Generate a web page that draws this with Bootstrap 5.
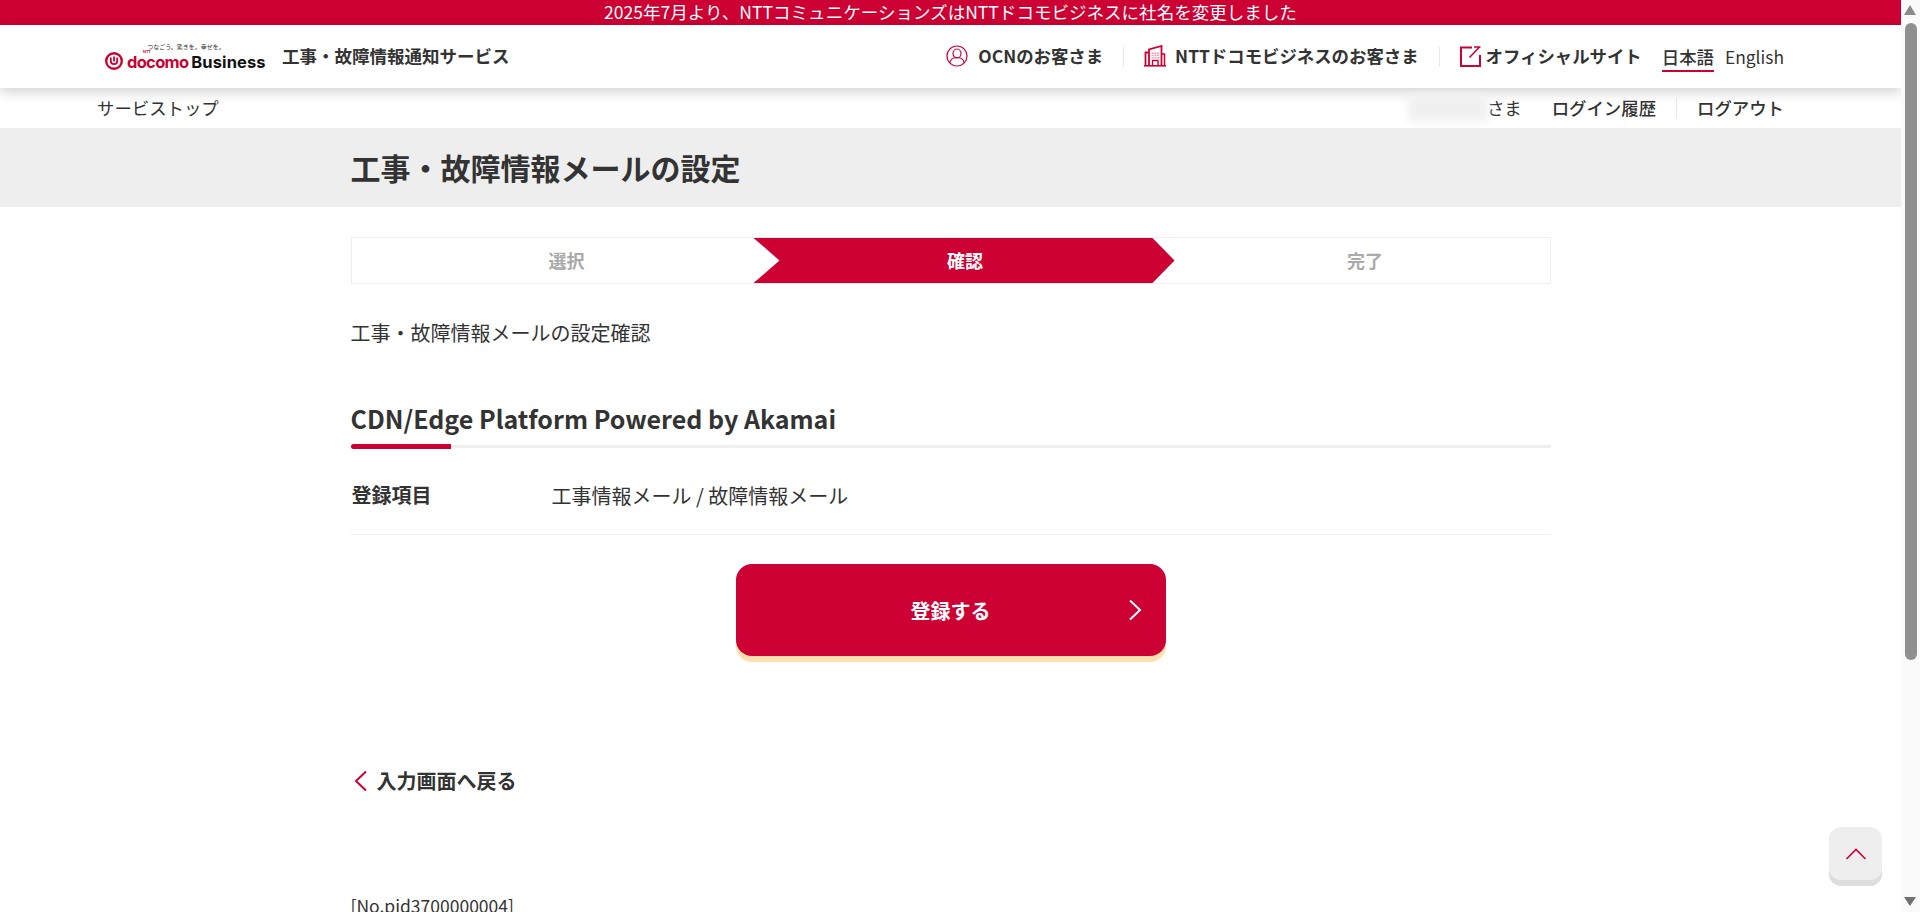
<!DOCTYPE html>
<html lang="ja">
<head>
    <meta charset="UTF-8">
    <meta name="viewport" content="width=device-width, initial-scale=1.0">
    <title>工事・故障情報メールの設定</title>
    <link href="https://cdn.jsdelivr.net/npm/bootstrap@5.3.0/dist/css/bootstrap.min.css" rel="stylesheet">
    <style>
        body { font-family: "Noto Sans CJK JP", "Noto Sans", sans-serif; color: #333; background: #fff; font-size: 18px; padding-right: 19px; padding-bottom: 40px; }
        a { color: inherit; text-decoration: none; }

        .fake-scroll { position: fixed; top: 0; right: 0; bottom: 0; width: 19px; background: #fafafa; z-index: 20; }
        .scroll-up, .scroll-down { position: absolute; left: 3px; width: 0; height: 0; border-left: 6.500px solid transparent; border-right: 6.500px solid transparent; }
        .scroll-up { top: 5px; border-bottom: 10px solid #8a8a8a; }
        .scroll-down { bottom: 6px; border-top: 9px solid #6f6f6f; }
        .scroll-thumb { position: absolute; left: 4px; top: 23px; width: 12px; height: 637px; background: #8f8f8f; border-radius: 6px; }

        .notice-bar { background: #c03; color: #fff; height: 25px; line-height: 24px; font-size: 17.550px; text-align: center; }
        .top-head { height: 63px; background: #fff; box-shadow: 0 4px 12px rgba(0,0,0,.18); padding: 0 117px 0 105px; position: relative; }
        .logo-wrap { width: 158px; line-height: 1; position: relative; padding-top: 8px; }
        .logo-tag { position: absolute; top: 0; left: 42px; width: 78px; font-size: 6px; color: #333; text-align: center; white-space: nowrap; }
        .logo-ntt { position: absolute; top: 6px; left: 38px; font-family: "Liberation Sans", sans-serif; font-size: 4px; line-height: 4px; font-weight: 700; color: #c03; }
        .logo-main { height: 18px; white-space: nowrap; }
        .logo-docomo { font-family: "Inter", sans-serif; font-weight: 700; font-size: 16.500px; line-height: 12px; color: #c03; letter-spacing: -.7px; margin-left: 4px; padding-top: 2px; }
        .logo-biz { font-family: "Inter", sans-serif; font-weight: 700; font-size: 16.500px; line-height: 12px; color: #111; margin-left: 3px; letter-spacing: .1px; padding-top: 2px; }
        .svc-name { font-size: 17.500px; font-weight: 700; margin-left: 19px; }
        .head-link { font-size: 17.400px; font-weight: 700; white-space: nowrap; }
        .head-sep { width: 1px; height: 20px; background: #e8e8e8; margin: 0 20px; }
        .lang-on { border-bottom: 2px solid #c03; line-height: 27px; padding-top: 1px; font-weight: 500; }
        .lang-off { font-weight: 400; margin-left: 11px; line-height: 27px; padding-top: 1px; padding-bottom: 2px; }

        .sub-nav { height: 40px; padding: 0 117px 0 97px; font-size: 17.400px; }
        .blur-name { width: 80px; height: 26px; background: #f0f0f0; filter: blur(4px); margin-right: -1px; }
        .sub-link { font-weight: 500; }
        .sub-sep { width: 1px; height: 20px; background: #e8e8e8; margin: 0 20px; }

        .title-band { background: #eee; height: 79px; }
        .page-wrap { width: 1200px; margin: 0 auto; }
        .page-title { font-size: 30px; font-weight: 700; margin: 0; line-height: 79px; }

        .step-bar { height: 47px; border: 1px solid #eee; margin-top: 30px; font-size: 18px; font-weight: 700; color: #aaa; }
        .step-item { width: 402px; padding-left: 28px; }
        .step-now { width: 421px; margin-right: -22px; background: #c03; color: #fff; clip-path: polygon(0 0, 399px 0, 100% 50%, 399px 100%, 0 100%, 26px 50%); padding-left: 2px; }
        .step-last { flex: 1; padding-left: 28px; }

        .intro-text { font-size: 20px; margin: 34px 0 0; line-height: 30px; }
        .sect-title { font-size: 25px; font-weight: 700; margin: 50px 0 0; line-height: 40px; }
        .sect-line { height: 3px; background: #eee; margin-top: 7px; position: relative; }
        .sect-line::before { content: ""; display: block; width: 100px; height: 5px; background: #c03; border-radius: 3px 0 0 3px; position: absolute; top: -1px; left: 0; }
        .info-row { padding: 31px 0 21px; border-bottom: 1px solid #eee; }
        .info-label { width: 201px; padding-left: 1px; font-size: 20px; font-weight: 700; line-height: 32px; }
        .info-value { font-size: 20px; line-height: 34px; }
        .submit-btn { display: flex; width: 430px; height: 92px; margin: 29px auto 0; background: #c03; color: #fff; border: 0; border-radius: 16px; box-shadow: 0 6px 0 #ffdfae; font-size: 20px; font-weight: 700; position: relative; padding-bottom: 5px; }
        .submit-btn:hover { background: #c03; color: #fff; }
        .btn-arrow { position: absolute; right: 24px; top: 35px; }
        .back-link { font-size: 20px; font-weight: 700; margin-top: 110px; padding-left: 2px; }
        .back-link svg { margin-right: 10px; }
        .page-no { font-size: 17.500px; margin-top: 97px; line-height: 26px; }
        .to-top { position: fixed; left: 1829px; top: 827px; width: 53px; height: 53px; background: #eee; border-radius: 12px; box-shadow: 0 6px 0 #ddd; }
    </style>
</head>
<body>
    <div class="notice-bar">2025年7月より、NTTコミュニケーションズはNTTドコモビジネスに社名を変更しました</div>

    <header class="top-head d-flex align-items-center justify-content-between">
        <div class="d-flex align-items-center">
            <a href="#" class="logo-wrap d-block">
                <div class="logo-tag">つなごう。驚きを。幸せを。</div>
                <span class="logo-ntt">NTT</span>
                <div class="logo-main d-flex align-items-center">
                    <svg width="18" height="18" viewBox="0 0 18 18" fill="none" stroke="#c03" class="flex-shrink-0">
                        <ellipse cx="9" cy="9" rx="7.800" ry="7.800" stroke-width="2.400"/>
                        <path d="M5.800 5.500v3.500a3.200 3.200 0 0 0 6.400 0V5.500" stroke-width="1.800"/>
                        <path d="M9 4.500v5" stroke-width="1.800"/>
                    </svg>
                    <span class="logo-docomo">docomo</span><span class="logo-biz">Business</span>
                </div>
            </a>
            <a href="#" class="svc-name">工事・故障情報通知サービス</a>
        </div>
        <nav class="d-flex align-items-center">
            <a href="#" class="head-link d-flex align-items-center" style="gap:10px">
                <svg width="22" height="22" viewBox="0 0 22 22" fill="none" stroke="#c03" stroke-width="1.200">
                    <circle cx="11" cy="11" r="10"/>
                    <ellipse cx="11" cy="8.500" rx="4" ry="4.500"/>
                    <path d="M3.800 18c.5-3.500 3-5.500 7.200-5.500s6.700 2 7.200 5.500"/>
                </svg>
                OCNのお客さま
            </a>
            <span class="head-sep"></span>
            <a href="#" class="head-link d-flex align-items-center" style="gap:9px">
                <svg width="22" height="22" viewBox="0 0 22 22" fill="none" stroke="#c03">
                    <path d="M1.500 20.500V7.500h3" stroke-width="1.800"/>
                    <path d="M5 20.500V4.500L17.500 1v19.500" stroke-width="1.800"/>
                    <path d="M17.500 9h3v11.500" stroke-width="1.500"/>
                    <path d="M0 20.800h22" stroke-width="1.600"/>
                    <path d="M7.500 7.500h7.500v6H7.500z" fill="#f0a0b8" stroke="none"/>
                    <path d="M10 7.500v6M12.500 7.500v6M7.500 9.500h7.500M7.500 11.500h7.500" stroke="#fff" stroke-width=".8"/>
                    <path d="M8.500 20.500v-5h5.500v5" stroke-width="1.400"/>
                </svg>
                NTTドコモビジネスのお客さま
            </a>
            <span class="head-sep"></span>
            <a href="#" class="head-link d-flex align-items-center" style="gap:5px">
                <svg width="21" height="21" viewBox="0 0 21 21" fill="none" stroke="#c03" stroke-width="2">
                    <path d="M12 1.500H1v18.500h19V9"/>
                    <path d="M9.500 11.500 19.500 1M14 1h6.500" stroke-width="1.600"/>
                </svg>
                オフィシャルサイト
            </a>
            <a href="#" class="head-link lang-on" style="margin-left:20px">日本語</a>
            <a href="#" class="head-link lang-off">English</a>
        </nav>
    </header>

    <div class="sub-nav d-flex align-items-center justify-content-between">
        <a href="#">サービストップ</a>
        <div class="d-flex align-items-center">
            <span class="blur-name"></span>
            <span>さま</span>
            <a href="#" class="sub-link" style="margin-left:30px">ログイン履歴</a>
            <span class="sub-sep"></span>
            <a href="#" class="sub-link">ログアウト</a>
        </div>
    </div>

    <div class="title-band">
        <div class="page-wrap">
            <h1 class="page-title">工事・故障情報メールの設定</h1>
        </div>
    </div>

    <main class="page-wrap">
        <div class="step-bar d-flex align-items-stretch">
            <div class="step-item d-flex align-items-center justify-content-center">選択</div>
            <div class="step-now d-flex align-items-center justify-content-center">確認</div>
            <div class="step-last d-flex align-items-center justify-content-center">完了</div>
        </div>

        <p class="intro-text">工事・故障情報メールの設定確認</p>

        <h2 class="sect-title">CDN/Edge Platform Powered by Akamai</h2>
        <div class="sect-line"></div>

        <div class="info-row d-flex">
            <div class="info-label">登録項目</div>
            <div class="info-value">工事情報メール / 故障情報メール</div>
        </div>

        <a href="#" class="btn submit-btn align-items-center justify-content-center">
            登録する
            <svg class="btn-arrow" width="14" height="22" viewBox="0 0 14 22" fill="none" stroke="#fff" stroke-width="2"><path d="M2 1.500 12 11 2 20.500"/></svg>
        </a>

        <a href="#" class="back-link d-flex align-items-center">
            <svg width="14" height="22" viewBox="0 0 14 22" fill="none" stroke="#c03" stroke-width="2"><path d="M13 1.500 3 11l10 9.500"/></svg>
            入力画面へ戻る
        </a>

        <p class="page-no">[No.pid3700000004]</p>
    </main>

    <a href="#" class="to-top d-flex align-items-center justify-content-center" aria-label="ページトップへ">
        <svg width="22" height="12" viewBox="0 0 22 12" fill="none" stroke="#c03" stroke-width="1.600"><path d="M1.500 11 11 1.500 20.500 11"/></svg>
    </a>

    <div class="fake-scroll">
        <span class="scroll-up"></span>
        <span class="scroll-thumb"></span>
        <span class="scroll-down"></span>
    </div>

    <script src="https://cdn.jsdelivr.net/npm/bootstrap@5.3.0/dist/js/bootstrap.bundle.min.js"></script>
</body>
</html>
